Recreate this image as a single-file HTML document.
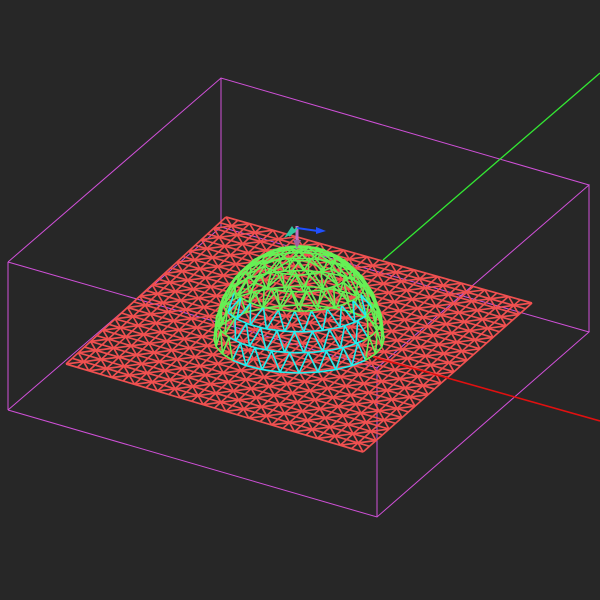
<!DOCTYPE html>
<html><head><meta charset="utf-8"><style>
html,body{margin:0;padding:0;background:#272727;width:600px;height:600px;overflow:hidden}
svg{display:block}
</style></head><body>
<svg id="s" width="600" height="600" viewBox="0 0 600 600" xmlns="http://www.w3.org/2000/svg">
<rect width="600" height="600" fill="#272727"/>
<g id="box" stroke="#d050d8" stroke-width="1" fill="none">
<polyline points="8,262 221,78 589,185 377,368 8,262"/>
<polyline points="8,410 221,227 589,332 377,517 8,410"/>
<line x1="8" y1="262" x2="8" y2="410"/>
<line x1="221" y1="78" x2="221" y2="227"/>
<line x1="589" y1="185" x2="589" y2="332"/>
<line x1="377" y1="368" x2="377" y2="517"/>
</g>
<g id="plane" stroke="#f05050" stroke-width="1.7"></g>
<line x1="383" y1="260" x2="600" y2="73" stroke="#33e833" stroke-width="1.3"/>
<line x1="373" y1="357" x2="600" y2="421" stroke="#e01010" stroke-width="1.6"/>
<g id="dome" fill="none" stroke-width="1.6"></g>
<g>
<line x1="297" y1="246" x2="297" y2="226" stroke="#c070c0" stroke-width="3"/>
<polygon points="293,240 301,240 297,248" fill="#a060a0"/>
<line x1="297" y1="228" x2="318" y2="231" stroke="#2050ff" stroke-width="2"/>
<polygon points="316,227 326,231 316,234" fill="#2050ff"/>
<line x1="297" y1="228" x2="289" y2="236" stroke="#30d0a0" stroke-width="2"/>
<polygon points="284,238 292,226 296,232" fill="#30c8a0"/>
</g>
</svg>
<script>
var NS="http://www.w3.org/2000/svg";
function L(g,a,b,c){var l=document.createElementNS(NS,"line");l.setAttribute("x1",a[0].toFixed(1));l.setAttribute("y1",a[1].toFixed(1));l.setAttribute("x2",b[0].toFixed(1));l.setAttribute("y2",b[1].toFixed(1));if(c)l.setAttribute("stroke",c);g.appendChild(l);}
var P0=[226,217],P1=[532,303],P2=[363,452],P3=[66,364],N=26;
function pp(u,v){var ax=P0[0]+(P1[0]-P0[0])*u,ay=P0[1]+(P1[1]-P0[1])*u,bx=P3[0]+(P2[0]-P3[0])*u,by=P3[1]+(P2[1]-P3[1])*u;return [ax+(bx-ax)*v,ay+(by-ay)*v];}
var g=document.getElementById("plane");
for(var i=0;i<=N;i++){L(g,pp(i/N,0),pp(i/N,1));L(g,pp(0,i/N),pp(1,i/N));}
for(var i=0;i<N;i++)for(var j=0;j<N;j++){ if((i+j)%2==0)L(g,pp(i/N,j/N),pp((i+1)/N,(j+1)/N)); else L(g,pp((i+1)/N,j/N),pp(i/N,(j+1)/N));}
var d=document.getElementById("dome"),C=[299,339],R=85,RH=95,s=0.4,c=Math.sqrt(1-s*s);
function sp(lat,lon){var x=Math.cos(lat)*Math.cos(lon),z=Math.cos(lat)*Math.sin(lon),y=Math.sin(lat);return {p:[C[0]+R*x,C[1]-RH*(y*c)+R*z*s],f:(z*c+y*s),y:y,x:x};}
var segs=[];
var NL=7,NM=28;
for(var a=0;a<=NL;a++){var lat=a/NL*Math.PI/2;var m=Math.max(1,Math.round(NM*Math.cos(lat)));
 for(var b=0;b<m;b++){segs.push([sp(lat,b/m*2*Math.PI),sp(lat,(b+1)/m*2*Math.PI)]);}}
for(var a=0;a<NL;a++){var l1=a/NL*Math.PI/2,l2=(a+1)/NL*Math.PI/2;var m=Math.max(4,Math.round(NM*Math.cos(l1)));
 for(var b=0;b<m;b++){var lo=b/m*2*Math.PI,off=(a%2)*Math.PI/m;segs.push([sp(l1,lo+off),sp(l2,lo+off+Math.PI/m)]);segs.push([sp(l1,lo+off),sp(l2,lo+off-Math.PI/m)]);}}
function cy(q){var f=(q[0].f+q[1].f)/2,y=(q[0].y+q[1].y)/2,x=(q[0].x+q[1].x)/2;return (f>=0&&y<0.6&&Math.abs(x)<0.8);}
segs.forEach(function(q){if(!cy(q)&&(q[0].f+q[1].f)<0)L(d,q[0].p,q[1].p,"#66f055");});
segs.forEach(function(q){if(cy(q))L(d,q[0].p,q[1].p,"#22f0f0");});
segs.forEach(function(q){if(!cy(q)&&(q[0].f+q[1].f)>=0)L(d,q[0].p,q[1].p,"#66f055");});
</script>
</body></html>
